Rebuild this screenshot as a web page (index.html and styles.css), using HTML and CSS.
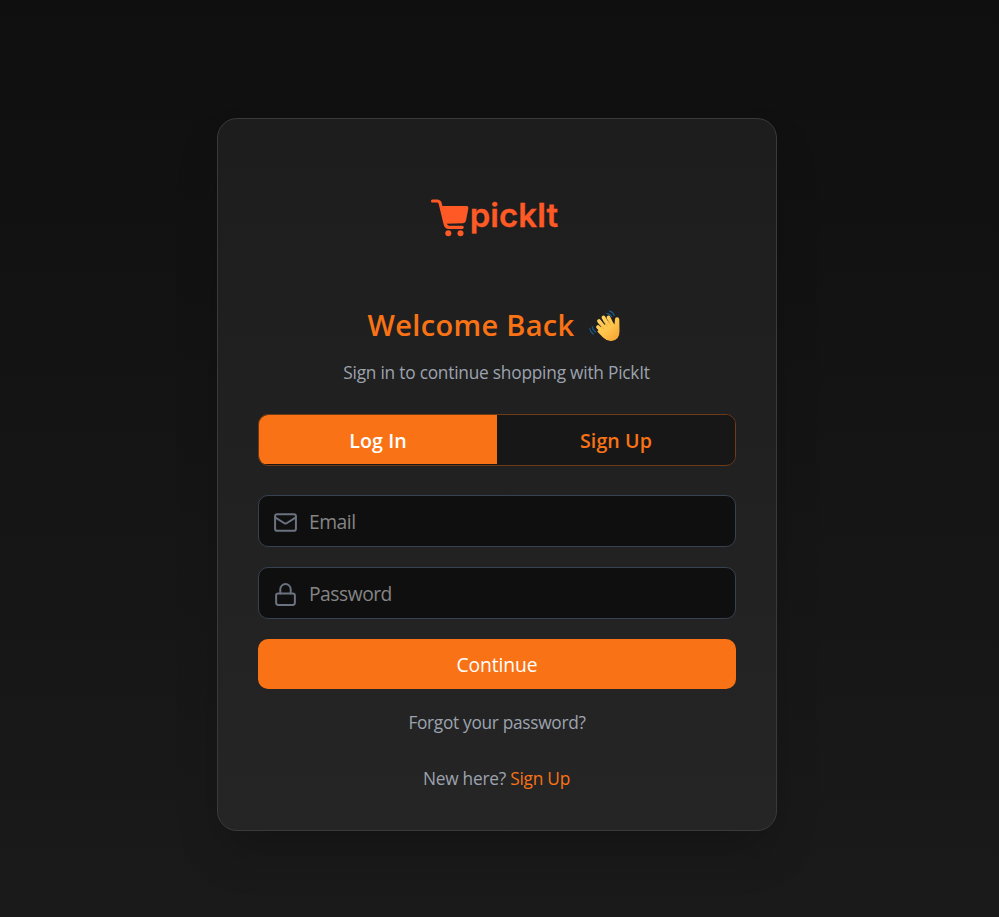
FILE: index.html
```
<!DOCTYPE html>
<html lang="en">
<head>
<meta charset="utf-8">
<title>PickIt - Log In</title>
<link rel="stylesheet" href="styles.css">
</head>
<body>
<main class="card">
  <div class="logo">
    <svg class="cart" width="39" height="39" viewBox="0 0 39 39">
      <path d="M2.500 3h4.400q2.700 0 3.300 2.500l5 20.500q.8 3.300 4 3.300h13" fill="none" stroke="#ff5a26" stroke-width="3.200" stroke-linecap="round"/>
      <path d="M10.500 8h26.200q2 0 1.700 1.900l-2.400 12.600q-.5 2.600-3 2.700l-17.300.5z" fill="#ff5a26"/>
      <circle cx="18.300" cy="35.300" r="3" fill="#ff5a26"/><circle cx="30.500" cy="35.300" r="3" fill="#ff5a26"/>
    </svg>
    <span class="brand">pickIt</span>
  </div>
  <h1 class="title"><span>Welcome Back</span>
    <svg class="wave" width="32" height="32" viewBox="0 0 32 32">
      <defs><linearGradient id="skin" x1="0" y1="0" x2="32" y2="32" gradientUnits="userSpaceOnUse"><stop offset="0" stop-color="#ffdc70"/><stop offset=".6" stop-color="#ffc54b"/><stop offset="1" stop-color="#f09a2c"/></linearGradient></defs>
      <g fill="none" stroke="url(#skin)" stroke-width="3.800" stroke-linecap="round"><path d="M9 17l6 6M10 11l8 10M14.500 7.500l6 10M19.500 7.500l4.500 9"/></g>
      <path d="M12 17l10-6 3.500 3.500.5-5.300q0-2 2-2 2.200 0 2.300 2.400l.2 11.400q.3 9-8.100 10-4.400.4-8.300-3.500l-5.800-6z" fill="url(#skin)"/>
      <path d="M11.200 14.500l3.500 4.200M14.800 11.300l3.500 5M18.800 9.800l2.500 4.500" fill="none" stroke="#e59a2b" stroke-width=".6" stroke-linecap="round"/>
      <path d="M17.800 3.500q3.300.3 4.900 3.300M20.500 1.200q3.500.8 4.700 4.300M3.200 16.500q.3 3.500 3.300 5.500M.8 18.500q.5 3.600 3.500 5.500" fill="none" stroke="#1d5c8f" stroke-width="1.200" stroke-linecap="round"/>
    </svg>
  </h1>
  <p class="subtitle">Sign in to continue shopping with PickIt</p>
  <div class="tabs">
    <button class="tab active">Log In</button>
    <button class="tab">Sign Up</button>
  </div>
  <form class="form">
    <label class="field">
      <svg class="icon" viewBox="0 0 24 24"><rect x="2" y="4" width="20" height="16" rx="2"/><path d="m22 7-8.970 5.700a1.940 1.940 0 0 1-2.060 0L2 7"/></svg>
      <input class="input" type="email" placeholder="Email">
    </label>
    <label class="field">
      <svg class="icon" viewBox="0 0 24 24"><rect x="3" y="11" width="18" height="11" rx="2"/><path d="M7 11V7a5 5 0 0 1 10 0v4"/></svg>
      <input class="input" type="password" placeholder="Password">
    </label>
    <button class="submit" type="button">Continue</button>
  </form>
  <p class="forgot">Forgot your password?</p>
  <p class="signup"><span>New here?</span> <a class="link">Sign Up</a></p>
</main>
</body>
</html>
```
FILE: styles.css
```
* { box-sizing: border-box; }
body {
  margin: 0;
  height: 917px;
  padding: 118px 0 0 217px;
  overflow: hidden;
  background: linear-gradient(#0f0f0f, #1a1a1a);
  font-family: "Open Sans", "Noto Sans", sans-serif;
  color: #9ca3af;
}
.card {
  width: 560px;
  height: 713px;
  padding: 40px;
  border: 1px solid #3a3a3a;
  border-radius: 20px;
  background: linear-gradient(#1d1d1d, #252525);
  box-shadow: 0 25px 50px -12px rgba(0, 0, 0, .25);
  text-align: center;
}
.logo {
  display: flex;
  align-items: center;
  justify-content: center;
  height: 117px;
  padding-right: 6px;
}
.cart { display: block; margin-right: 1px; }
.brand {
  margin-top: -5px;
  color: #ff5a26;
  font: 600 33px/40px Inter, sans-serif;
  -webkit-text-stroke: .3px #ff5a26;
}
.title {
  display: flex;
  align-items: center;
  justify-content: center;
  gap: 15px;
  height: 40px;
  margin: 29px 0 0;
  padding-right: 5px;
  color: #f97316;
  font-size: 29px;
  font-weight: 600;
  line-height: 40px;
  letter-spacing: .3px;
}
.wave { display: block; margin-top: 1px; }
.subtitle {
  margin: 15px 0 0;
  padding-right: 1px;
  font-size: 17.300px;
  line-height: 26px;
  letter-spacing: -.22px;
}
.tabs {
  display: flex;
  height: 52px;
  margin-top: 28px;
  padding-bottom: 1px;
  overflow: hidden;
  border: 1px solid #703a16;
  border-radius: 10px;
  background: #171717;
}
.tab {
  flex: 1;
  padding: 3px 0 0;
  border: 0;
  background: #171717;
  color: #f97316;
  font: 600 19.600px/26px "Open Sans", sans-serif;
  letter-spacing: .1px;
}
.tab.active { background: #f97316; color: #fff; }
.form {
  display: grid;
  gap: 20px;
  margin-top: 29px;
}
.field {
  display: flex;
  align-items: center;
  gap: 11px;
  height: 52px;
  padding: 1px 15px 0 14px;
  border: 1px solid #374151;
  border-radius: 10px;
  background: #0f0f0f;
}
.icon {
  flex: none;
  width: 25px;
  height: 25px;
  margin-top: 1px;
  fill: none;
  stroke: #6b7280;
  stroke-width: 1.900;
  stroke-linecap: round;
  stroke-linejoin: round;
}
.input {
  flex: 1;
  min-width: 0;
  padding: 0;
  border: 0;
  outline: 0;
  background: transparent;
  color: #fff;
  font: 400 19.300px/26px "Open Sans", sans-serif;
  letter-spacing: -.5px;
}
.input::placeholder { color: #858585; opacity: 1; }
.submit {
  height: 50px;
  padding: 1px 0 0;
  border: 0;
  border-radius: 10px;
  background: #f97316;
  color: #fff;
  font: 500 19.300px/26px "Open Sans", sans-serif;
  letter-spacing: -.1px;
}
.forgot {
  margin: 21px 0 0;
  font-size: 17.300px;
  line-height: 25px;
  letter-spacing: -.3px;
}
.signup {
  margin: 31px 0 0;
  padding-right: 1px;
  font-size: 17.300px;
  line-height: 25px;
  letter-spacing: -.24px;
}
.link { color: #f97316; }
```
